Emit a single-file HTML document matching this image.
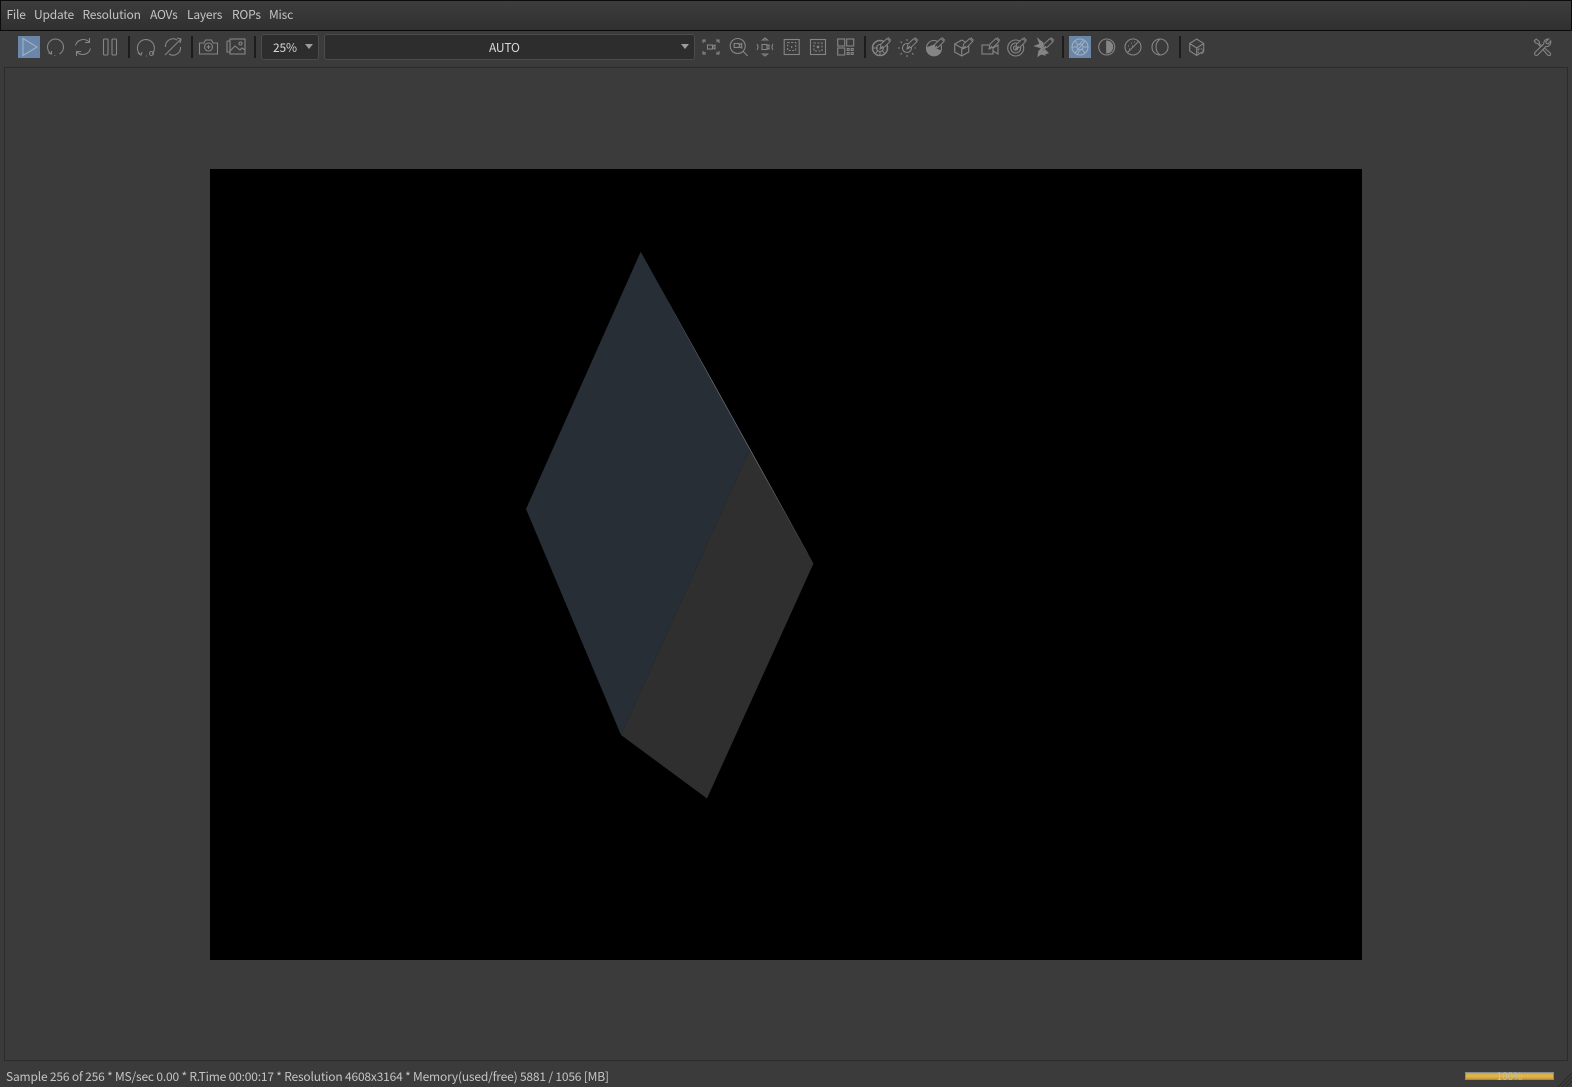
<!DOCTYPE html>
<html><head><meta charset="utf-8"><style>
html,body{margin:0;padding:0;width:1572px;height:1087px;overflow:hidden;background:#3b3b3b;font-family:"Noto Sans CJK SC","Liberation Sans",sans-serif;color:#c8c8c8}
div{position:absolute;box-sizing:border-box}
#menu{left:0;top:0;width:1572px;height:31px;background:linear-gradient(#3d3d3d,#303030);border:1px solid #0c0c0c}
.m{position:absolute;top:15px;font-size:12px;letter-spacing:-.19px;line-height:14px;transform:translateY(-50%);color:#c4c4c4;white-space:nowrap}
#vp{left:4px;top:67px;width:1564px;height:994px;border:1px solid #2b2b2b;background:#3b3b3b}
#img{left:210px;top:169px;width:1152px;height:791px;background:#000}
.combo{background:#2d2d2d;border:1px solid #4c4c4c;border-radius:3px}
.tri{width:0;height:0;border-left:4px solid transparent;border-right:4px solid transparent;border-top:5px solid #9c9c9c}
#status{left:6px;top:1069px;font-size:12px;letter-spacing:-.185px;line-height:16px;color:#c4c4c4;white-space:nowrap}
#prog{left:1465px;top:1072px;width:89px;height:8px;background:linear-gradient(#c9a64a,#e2b94d 50%,#c99b35);border:1px solid #8a8a8a;font-size:10px;line-height:6px;text-align:center;color:#c9c09e}
svg{position:absolute;left:0;top:0}
</style></head><body>
<div id="menu"></div>
<span class="m" style="left:6.500px">File</span>
<span class="m" style="left:34px">Update</span>
<span class="m" style="left:82.500px">Resolution</span>
<span class="m" style="left:150px">AOVs</span>
<span class="m" style="left:187px">Layers</span>
<span class="m" style="left:232px">ROPs</span>
<span class="m" style="left:269px">Misc</span>
<div id="vp"></div>
<div id="img"></div>
<div class="combo" style="left:261px;top:34px;width:58px;height:26px"></div>
<span class="m" style="left:273px;top:48px;color:#d8d8d8">25%</span>
<div class="tri" style="left:305px;top:44px"></div>
<div class="combo" style="left:324px;top:34px;width:371px;height:26px"></div>
<span class="m" style="left:489px;top:48px;color:#d8d8d8">AUTO</span>
<div class="tri" style="left:681px;top:44px"></div>
<div style="left:18px;top:36px;width:22px;height:22px;background:#6a86a8"></div>
<div style="left:1069px;top:36px;width:22px;height:22px;background:#6a86a8"></div>
<div id="status">Sample 256 of 256 * MS/sec 0.00 * R.Time 00:00:17 * Resolution 4608x3164 * Memory(used/free) 5881 / 1056 [MB]</div>
<div id="prog">100%</div>
<svg width="1572" height="1087" viewBox="0 0 1572 1087" fill="none">
<defs>
<linearGradient id="edge" gradientUnits="userSpaceOnUse" x1="660" y1="287" x2="808" y2="554"><stop offset="0" stop-color="#6a6e72" stop-opacity="0"/><stop offset=".35" stop-color="#6a6e72"/><stop offset=".65" stop-color="#70747a"/><stop offset="1" stop-color="#6a6e72" stop-opacity=".2"/></linearGradient>
<g id="pen"><path d="M-1 2L0-3L6-8.500L9-5.500L3.500 0Z" fill="#3b3b3b" stroke="#858585" stroke-width="1"/><path d="M7-9.500L10-6.500M-1 2L2-1" stroke="#858585" stroke-width="1"/></g>
</defs>
<polygon points="640.700,251.700 526,509 621,735 750,449" fill="#272e36"/>
<polygon points="750,449 813.500,563.500 707,798.500 621,735" fill="#2f2f2f"/>
<line x1="660" y1="287" x2="808" y2="554" stroke="url(#edge)" stroke-width=".7"/>
<g stroke="#1c1c1c" stroke-width="2"><path d="M129 36V58M192 36V58M255 36V58M865 36V58M1063 36V58M1180 36V58"/></g>
<g stroke="#858585" stroke-width="1.100">
<path d="M23 38.500V55.500L37 47Z" stroke="#9fb1c6"/>
<g transform="translate(55.500,47)"><path d="M-4 7A8 8 0 1 1 4 7"/><path d="M-7 6L-4 7L-4 4M-1 8.500h.8"/></g>
<g transform="translate(83,47)"><path d="M-7.500 -1.500A8 8 0 0 1 6 -5M7.500 1.500A8 8 0 0 1 -6 5"/><path d="M6.500 -9V-4.500H2M-6.500 9V4.500H-2"/></g>
<rect x="103.500" y="39" width="4.500" height="16" rx="1"/><rect x="112" y="39" width="4.500" height="16" rx="1"/>
<g transform="translate(146,47)"><path d="M-5 8A8.500 8.500 0 1 1 6 7"/><path d="M-8 6L-5 8L-4 5"/><circle cx="5.500" cy="6.500" r="2"/><path d="M0 9h.8"/></g>
<g transform="translate(173,47)"><path d="M-7.500 0A7.500 7.500 0 0 1 4-7M7.500 0A7.500 7.500 0 0 1-4 7M-8 8L8-8M4-9L8-8L7-4"/></g>
<g transform="translate(208.500,47)"><path d="M-9-4H-4.500L-3-7H3L4.500-4H9V7H-9Z"/><circle r="4"/><path d="M-2 0H2M0-2V2"/></g>
<g transform="translate(236,47)"><path d="M-9-6V5H-6M-9-6H-6"/><rect x="-6" y="-8" width="15" height="15"/><circle cx="4.500" cy="-3.500" r="1.500"/><path d="M-6 4L-1-1L4 3L6 1L9 3"/></g>
<g transform="translate(711,47)"><rect x="-3.500" y="-2" width="5" height="4"/><path d="M1.500-.5L4-2V2L1.500 .5"/><path d="M-8-4V-7H-5M-8-7L-5.500-5M8-4V-7H5M8-7L5.500-5M-8 4V7H-5M-8 7L-5.500 5M8 4V7H5M8 7L5.500 5"/></g>
<g transform="translate(737.700,46)"><circle r="7.500"/><path d="M5.500 5.500L10 10"/><rect x="-3.500" y="-2.500" width="5" height="4"/><path d="M1.500-1L4-2.500V2L1.500 .5"/></g>
<g transform="translate(765,47)"><rect x="-3" y="-2.500" width="5" height="5"/><path d="M2-1L4-2V2L2 1"/><path d="M-8-3Q-6 0-8 3M8-3Q6 0 8 3M-2.500-7L0-9L2.500-7ZM-2.500 7L0 9L2.500 7Z"/></g>
<g transform="translate(791.700,47)"><rect x="-7.500" y="-7.500" width="15" height="15"/><rect x="-4" y="-4.500" width="8" height="8" stroke-dasharray="2 1.500"/><path d="M0-1V1"/></g>
<g transform="translate(818,47)"><rect x="-7.500" y="-7.500" width="15" height="15"/><rect x="-4" y="-4" width="8" height="8" stroke-dasharray="2 1.500"/><circle r=".8" fill="#858585"/></g>
<g transform="translate(845.700,47)"><rect x="-8" y="-8" width="7" height="7"/><rect x="1" y="-8" width="7" height="7"/><rect x="-8" y="1" width="7" height="7"/><path d="M1.500 1.500h2v2h-2zM5.500 1.500h2v2h-2zM1.500 5.500h2v2h-2zM5.500 5.500h2v2h-2z"/></g>
<g transform="translate(881,47)"><circle cx="-1" cy="1" r="7.500" stroke-width="1.500"/><circle cx="-1" cy="1" r="3.500"/><path d="M-8 1H-3M-1 8V4M-5 6L-3 3M3 6L1 3"/><use href="#pen"/></g>
<g transform="translate(908,47)"><circle cx="-1" cy="1" r="4.500"/><path d="M-10 1H-8M8 1H6.500M-1 10V8M-7.500-5.500L-6-4M-7.500 7.500L-6 6M5.500 7.500L4 6M-1-8V-6" stroke-dasharray="2 1"/><use href="#pen"/></g>
<g transform="translate(935,47)"><circle cx="-1" cy="1" r="7.500"/><path d="M-8.500 1A7.500 7.500 0 0 0 6 4L-1 1L-1-2Z" fill="#858585"/><use href="#pen"/></g>
<g transform="translate(962.700,47)"><path d="M-8-3L-1-7L6-3V5L-1 9L-8 5ZM-8-3L-1 1L6-3M-1 1V9"/><use href="#pen" x="1"/></g>
<g transform="translate(990,47)"><rect x="-8" y="-2" width="11" height="9"/><path d="M3 1L8-2V7L3 4"/><use href="#pen"/></g>
<g transform="translate(1016.700,47)"><circle cx="-1" cy="1" r="8"/><circle cx="-1" cy="1" r="5"/><circle cx="-1" cy="1" r="2.200"/><use href="#pen"/></g>
<g transform="translate(1044,47)"><path d="M-2 1L-9-1L-4-3L-6-8L-1-4L-2 1L1 8L-3 7L-6 9L-5 4Z" fill="#858585"/><path d="M0 2L4 6L0 7" fill="#858585"/><use href="#pen"/></g>
</g>
<g stroke="#9fb0c4" stroke-width="1" transform="translate(1080,47)"><circle r="8"/><circle r="3"/><path d="M-8 0H-3M3 0H8M-5-6L-2-2M5 6L2 2M-3 7L1 2M3-7L-1-2M-5 6L5-6"/></g>
<g stroke="#858585" stroke-width="1.100">
<g transform="translate(1106.700,47)"><circle r="8"/><path d="M0-6A6 6 0 0 1 0 6Z" fill="#858585"/></g>
<g transform="translate(1133,47)"><circle r="8"/><path d="M-6 6L6-6"/><path d="M-5-1h1M-2-4h1M-4 2h1M1-5h1M-1-1h1" stroke-width="1"/></g>
<g transform="translate(1160,47)"><circle r="8"/><path d="M0-8A10 10 0 0 0 0 8"/></g>
<g transform="translate(1196.700,47)"><path d="M-7-3.500L0-8L7-3.500V4L0 8.500L-7 4ZM-7-3.500L0 1L7-3.500M0 1V8.500"/><rect x="1.500" y="2" width="5" height="4.500" stroke-dasharray="1.500 1"/></g>
<g transform="translate(1542.700,47)"><path d="M-8.500-6L-6.500-8L-3.500-5.500L-3-3L7.500 6Q8.500 7.500 7 8.500Q5.500 9 4.500 7.500L-5-3.500L-7-4Z"/><path d="M-6.500 8.500Q-8.500 8-8 5.500L1-3Q1-7 4.500-8L6-8L3-5L4-3.500L5.500-3L8-6Q8.500-2 5-.5L3-.5L-4 7Q-5 8.500-6.500 8.500Z" fill="#3b3b3b"/></g>
</g>
<path d="M1558 1087L1572 1073M1562 1087L1572 1077M1566 1087L1572 1081" stroke="#2a2a2a" stroke-width="1"/>
</svg>
</body></html>
